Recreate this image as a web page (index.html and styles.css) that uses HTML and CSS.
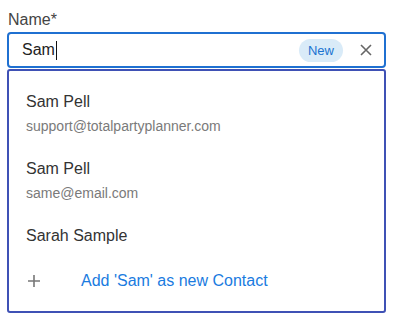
FILE: index.html
```html
<!DOCTYPE html>
<html lang="en">
<head>
  <meta charset="UTF-8" />
  <meta name="viewport" content="width=device-width, initial-scale=1.0" />
  <title>Contact picker</title>
  <link rel="stylesheet" href="styles.css">
</head>
<body>
  <div class="field">
    <label class="field-label" for="nameInput">Name*</label>

    <div class="input-box">
      <span class="input-text" id="nameInput">Sam</span><span class="caret"></span>
      <span class="badge">New</span>
      <button class="clear-btn" aria-label="Clear">
        <svg width="12" height="12" viewBox="0 0 12 12">
          <path d="M1 1 L11 11 M11 1 L1 11" stroke="#666" stroke-width="1.6" fill="none" />
        </svg>
      </button>
    </div>

    <div class="dropdown">
      <div class="option">
        <div class="option-name">Sam Pell</div>
        <div class="option-email">support@totalpartyplanner.com</div>
      </div>
      <div class="option">
        <div class="option-name">Sam Pell</div>
        <div class="option-email">same@email.com</div>
      </div>
      <div class="option">
        <div class="option-name">Sarah Sample</div>
      </div>
      <div class="add-row">
        <svg class="plus" width="12" height="12" viewBox="0 0 12 12">
          <path d="M6 0 V12 M0 6 H12" stroke="#777" stroke-width="1.6" fill="none" />
        </svg>
        <span class="add-text">Add 'Sam' as new Contact</span>
      </div>
    </div>
  </div>
</body>
</html>
```

FILE: styles.css
```css
body {
  margin: 0;
  font-family: 'Liberation Sans', Arial, sans-serif;
  background: #fff;
  color: #333;
}
.field {
  padding: 10px 0 0 7px;
  width: 379px;
}
.field-label {
  display: block;
  font-size: 16px;
  line-height: 20px;
  color: #444;
  padding-left: 1px;
  margin-bottom: 2px;
}
.input-box {
  display: flex;
  align-items: center;
  height: 32px;
  border: 2px solid #1f70d1;
  border-radius: 4px;
  padding: 0 12px 0 13px;
}
.input-text {
  font-size: 16px;
  color: #222;
}
.caret {
  display: inline-block;
  width: 1px;
  height: 19px;
  background: #111;
  margin-left: 1px;
}
.badge {
  margin-left: auto;
  background: #d9ebf8;
  color: #1a73d0;
  font-size: 13px;
  line-height: 23px;
  padding: 0 9px;
  border-radius: 12px;
}
.clear-btn {
  background: none;
  border: none;
  padding: 0;
  margin-left: 17px;
  width: 12px;
  height: 12px;
  display: flex;
  cursor: pointer;
}
.dropdown {
  margin-top: 1px;
  border: 2px solid #3f51b5;
  border-radius: 3px;
  padding-top: 9px;
}
.option {
  padding: 10px 17px 9px;
}
.option-name {
  font-size: 16px;
  line-height: 24px;
  color: #333;
}
.option-email {
  font-size: 14px;
  line-height: 24px;
  color: #7a7a7a;
}
.add-row {
  display: flex;
  align-items: center;
  padding: 12px 19px 18px;
}
.plus {
  flex: none;
}
.add-text {
  margin-left: 41px;
  font-size: 16px;
  line-height: 24px;
  color: #1a7be0;
}
```
